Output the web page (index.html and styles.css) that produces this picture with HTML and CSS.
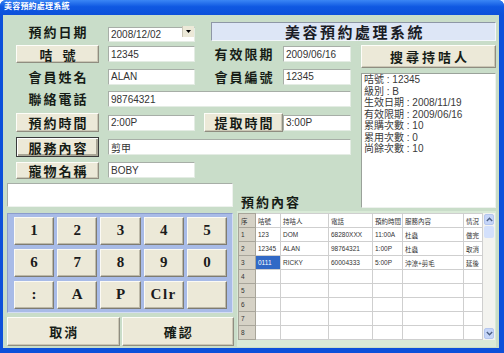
FILE: index.html
```html
<!DOCTYPE html>
<html lang="zh-Hant">
<head>
    <meta charset="UTF-8">
    <title>美容預約處理系統</title>
    <link rel="stylesheet" href="styles.css">
</head>
<body>
    <div class="window">
        <div class="titlebar">美容預約處理系統</div>

        <div class="client">
            <!-- Row 1 -->
            <div class="label col-a row-1">預約日期</div>
            <div class="combo col-b row-1">
                <input class="field" value="2008/12/02">
                <span class="combo-arrow">
                    <svg width="5" height="3" viewBox="0 0 5 3"><path d="M0 0h5L2.5 3z" fill="#000"/></svg>
                </span>
            </div>
            <div class="banner row-1">美容預約處理系統</div>

            <!-- Row 2 -->
            <button class="btn col-a row-2 h18"><span>咭</span><span class="gap"></span><span>號</span></button>
            <input class="field col-b row-2" value="12345">
            <div class="label col-c row-2">有效限期</div>
            <input class="field col-d row-2" value="2009/06/16">
            <button class="btn btn-search col-side row-2">搜尋持咭人</button>

            <!-- Row 3 -->
            <div class="label col-a row-3">會員姓名</div>
            <input class="field col-b row-3 h17" value="ALAN">
            <div class="label col-c row-3">會員編號</div>
            <input class="field col-d row-3 h17" value="12345">
            <div class="info col-side">
                <div>咭號 : 12345</div>
                <div>級別 : B</div>
                <div>生效日期 : 2008/11/19</div>
                <div>有效限期 : 2009/06/16</div>
                <div>累購次數 : 10</div>
                <div>累用次數 : 0</div>
                <div>尚餘次數 : 10</div>
            </div>

            <!-- Row 4 -->
            <div class="label col-a row-4">聯絡電話</div>
            <input class="field col-wide row-4" value="98764321">

            <!-- Row 5 -->
            <button class="btn col-a row-5">預約時間</button>
            <input class="field col-b row-5" value="2:00P">
            <button class="btn col-c row-5">提取時間</button>
            <input class="field col-d row-5" value="3:00P">

            <!-- Row 6 -->
            <button class="btn btn-focus col-a row-6">服務內容</button>
            <input class="field col-wide row-6 h17" value="剪甲">

            <!-- Row 7 -->
            <button class="btn col-a row-7 h17">寵物名稱</button>
            <input class="field col-b row-7" value="BOBY">

            <!-- Row 8 -->
            <input class="display" value="">
            <div class="label table-title">預約內容</div>

            <!-- Keypad -->
            <div class="keypad">
                <button class="key">1</button>
                <button class="key">2</button>
                <button class="key">3</button>
                <button class="key">4</button>
                <button class="key">5</button>
                <button class="key">6</button>
                <button class="key">7</button>
                <button class="key">8</button>
                <button class="key">9</button>
                <button class="key">0</button>
                <button class="key">:</button>
                <button class="key">A</button>
                <button class="key">P</button>
                <button class="key key-clr">Clr</button>
                <button class="key"></button>
            </div>

            <!-- Booking grid -->
            <div class="booking">
                <table class="grid">
                    <colgroup>
                        <col class="w-seq"><col class="w-card"><col class="w-owner"><col class="w-tel">
                        <col class="w-time"><col class="w-service"><col class="w-state">
                    </colgroup>
                    <tr class="head"><td class="fixed">序</td><td>咭號</td><td>持咭人</td><td>電話</td><td>預約時間</td><td>服務內容</td><td>情況</td></tr>
                    <tr><td class="fixed">1</td><td>123</td><td>DOM</td><td>68280XXX</td><td>11:00A</td><td>杜蟲</td><td>做完</td></tr>
                    <tr><td class="fixed">2</td><td>12345</td><td>ALAN</td><td>98764321</td><td>1:00P</td><td>杜蟲</td><td>取消</td></tr>
                    <tr><td class="fixed">3</td><td class="selected">0111</td><td>RICKY</td><td>60004333</td><td>5:00P</td><td>沖涼+剪毛</td><td>延後</td></tr>
                    <tr><td class="fixed">4</td><td></td><td></td><td></td><td></td><td></td><td></td></tr>
                    <tr><td class="fixed">5</td><td></td><td></td><td></td><td></td><td></td><td></td></tr>
                    <tr><td class="fixed">6</td><td></td><td></td><td></td><td></td><td></td><td></td></tr>
                    <tr><td class="fixed">7</td><td></td><td></td><td></td><td></td><td></td><td></td></tr>
                    <tr><td class="fixed">8</td><td></td><td></td><td></td><td></td><td></td><td></td></tr>
                </table>
                <div class="scrollbar">
                    <div class="scroll-btn">
                        <svg width="7" height="5" viewBox="0 0 7 5"><path d="M0.8 4L3.5 1.3 6.2 4" fill="none" stroke="#4d6185" stroke-width="1.4"/></svg>
                    </div>
                    <div class="scroll-thumb"></div>
                    <div class="scroll-track"></div>
                    <div class="scroll-btn">
                        <svg width="7" height="5" viewBox="0 0 7 5"><path d="M0.8 1L3.5 3.7 6.2 1" fill="none" stroke="#4d6185" stroke-width="1.4"/></svg>
                    </div>
                </div>
            </div>

            <!-- Bottom actions -->
            <div class="actions">
                <button class="btn btn-action">取消</button>
                <button class="btn btn-action">確認</button>
            </div>
        </div>
    </div>
</body>
</html>
```

FILE: styles.css
```css
/* Base */
body {
    margin: 0;
    background: #fff;
    font-family: "Liberation Sans", "Noto Sans CJK TC", sans-serif;
}

/* Window frame */
.window {
    width: 504px;
    height: 353px;
    box-sizing: border-box;
    display: flex;
    flex-direction: column;
    background: #0c50da;
    border-radius: 6px 6px 0 0;
    overflow: hidden;
}

.titlebar {
    height: 15px;
    line-height: 15px;
    padding-left: 4px;
    color: #fff;
    font: bold 8px "Noto Sans CJK TC", sans-serif;
    letter-spacing: 0.2px;
    background: linear-gradient(#3b86f5, #0f58e2 45%, #0c50da);
}

/* Client area */
.client {
    flex: 1;
    margin: 0 5px 5px 3px;
    padding: 5px 3px 0 4px;
    background: #c9ddc9;
    display: grid;
    grid-template-columns: 9px 83px 9px 87px 9px 30px 4px 41px 4px 68px 10px 135px;
    grid-template-rows: 23px 22px 23px 22px 25px 24px 22px 29px 105px 33px;
    align-items: center;
}

/* Grid placement */
.col-a { grid-column: 2 / 3; }
.col-b { grid-column: 4 / 5; }
.col-c { grid-column: 6 / 10; }
.col-d { grid-column: 10 / 11; }
.col-wide { grid-column: 4 / 11; }
.col-side { grid-column: 12 / 13; }

.row-1 { grid-row: 1; }
.row-2 { grid-row: 2; }
.row-3 { grid-row: 3; }
.row-4 { grid-row: 4; }
.row-5 { grid-row: 5; }
.row-6 { grid-row: 6; }
.row-7 { grid-row: 7; }

/* Labels */
.label {
    font: bold 13px "Noto Sans CJK TC", sans-serif;
    letter-spacing: 2px;
    padding-left: 2px;
    color: #161c16;
    text-align: center;
    line-height: 16px;
}

/* Buttons */
.btn {
    height: 19px;
    padding: 0 0 0 2px;
    margin: 0;
    background: #ece9d8;
    border: 1px solid;
    border-color: #fdfdf8 #8f8d80 #8f8d80 #fdfdf8;
    box-shadow: inset -1px -1px 0 #cbc7b5;
    font: bold 13px "Noto Sans CJK TC", sans-serif;
    letter-spacing: 2px;
    color: #161c16;
    display: flex;
    align-items: center;
    justify-content: center;
    line-height: 1;
}

.btn .gap {
    width: 8px;
}

.h18 { height: 18px; }
.h17 { height: 17px; }

.btn-focus {
    height: 20px;
    border: 1px solid #3a3a3a;
    box-shadow: inset 1px 1px 0 #fff, inset -2px -2px 0 #a9a696;
}

.btn-search {
    align-self: start;
    margin-top: 2px;
    height: 23px;
    letter-spacing: 3px;
    padding-left: 3px;
}

/* Text fields */
.field {
    height: 16px;
    box-sizing: border-box;
    width: 100%;
    margin: 0;
    padding: 0 2px;
    background: #fff;
    border: 1px solid;
    border-color: #a7aea7 #e4ece4 #e4ece4 #a7aea7;
    font: 10px "Liberation Sans", "Noto Sans CJK TC", sans-serif;
    color: #333;
    outline: none;
}

.combo {
    position: relative;
    height: 15px;
}

.combo .field {
    height: 15px;
}

.combo-arrow {
    position: absolute;
    top: 2px;
    right: 1px;
    width: 11px;
    height: 11px;
    background: #ece9d8;
    border-left: 1px solid #c9c6b6;
    display: flex;
    align-items: center;
    justify-content: center;
}

/* Title banner */
.banner {
    grid-column: 6 / 13;
    margin-left: 7px;
    height: 19px;
    box-sizing: border-box;
    background: #dde6f6;
    border: 1px solid;
    border-color: #8e97a6 #f4f7fc #f4f7fc #8e97a6;
    font: bold 15px "Noto Sans CJK TC", sans-serif;
    letter-spacing: 2.5px;
    padding-left: 3px;
    color: #1a1c26;
    text-align: center;
    line-height: 17px;
}

/* Member info */
.info {
    grid-row: 3 / 9;
    align-self: stretch;
    margin: 8px 0 2px;
    background: #fff;
    border: 1px solid;
    border-color: #9aa29a #eef2ee #eef2ee #9aa29a;
    padding: 0 2px;
    font-size: 10px;
    line-height: 11.5px;
    color: #3a3a3a;
}

/* Keypad display */
.display {
    grid-column: 1 / 7;
    grid-row: 8;
    align-self: start;
    margin: 2px 1px 0 0;
    height: 24px;
    box-sizing: border-box;
    background: #fff;
    border: 1px solid;
    border-color: #a7aea7 #eef2ee #eef2ee #a7aea7;
    outline: none;
}

.table-title {
    grid-column: 8 / 12;
    grid-row: 8;
    align-self: end;
    text-align: left;
    padding-left: 3px;
}

/* Keypad */
.keypad {
    grid-column: 1 / 7;
    grid-row: 9;
    height: 100px;
    box-sizing: border-box;
    margin-right: 1px;
    padding: 4px 5px 4px 6px;
    background: #a8bbe7;
    border: 1px solid;
    border-color: #8b9ccc #d4ddf4 #d4ddf4 #8b9ccc;
    display: grid;
    grid-template-columns: repeat(5, 1fr);
    grid-auto-rows: 28px;
    column-gap: 3px;
    row-gap: 4px;
    align-content: center;
}

.key {
    margin: 0;
    padding: 0;
    background: #ece9d8;
    border: 1px solid;
    border-color: #fbfaf4 #7e7c72 #7e7c72 #fbfaf4;
    box-shadow: inset -1px -1px 0 #bdb9a8;
    font: bold 15px "Liberation Serif", serif;
    color: #1b1b1b;
}

.key-clr {
    letter-spacing: 1.5px;
}

/* Bottom actions */
.actions {
    grid-column: 1 / 7;
    grid-row: 10;
    display: flex;
    gap: 2px;
    height: 29px;
}

.btn-action {
    flex: 1;
    height: 29px;
}

/* Booking grid */
.booking {
    grid-column: 8 / 13;
    grid-row: 9 / 11;
    align-self: stretch;
    margin: 1px 0 1px -1px;
    padding: 2px 1px;
    background: #d9ead7;
    display: flex;
    align-items: flex-start;
}

.grid {
    border-collapse: collapse;
    table-layout: fixed;
    width: 244px;
    background: #fff;
    font-size: 6.5px;
    color: #333;
}

.grid td {
    height: 13px;
    padding: 0 0 0 2px;
    border: 1px solid #cfcfcf;
    white-space: nowrap;
    overflow: hidden;
}

.grid .fixed {
    background: #d6d2c6;
    border-color: #a8a59a;
    color: #333;
}

.grid .selected {
    background: #3169c6;
    color: #fff;
}

.w-seq { width: 17px; }
.w-card { width: 25px; }
.w-owner { width: 48px; }
.w-tel { width: 44px; }
.w-time { width: 30px; }
.w-service { width: 61px; }
.w-state { width: 19px; }

.scrollbar {
    width: 12px;
    height: 127px;
    background: #f3f3ef;
    display: flex;
    flex-direction: column;
}

.scroll-btn {
    height: 11px;
    margin: 1px;
    border-radius: 2px;
    background: #c5d5f8;
    border: 1px solid #b4c6ee;
    box-sizing: border-box;
    display: flex;
    align-items: center;
    justify-content: center;
}

.scroll-thumb {
    height: 12px;
    margin: 0 1px;
    border-radius: 2px;
    background: #d3e0fb;
}

.scroll-track {
    flex: 1;
}
```
